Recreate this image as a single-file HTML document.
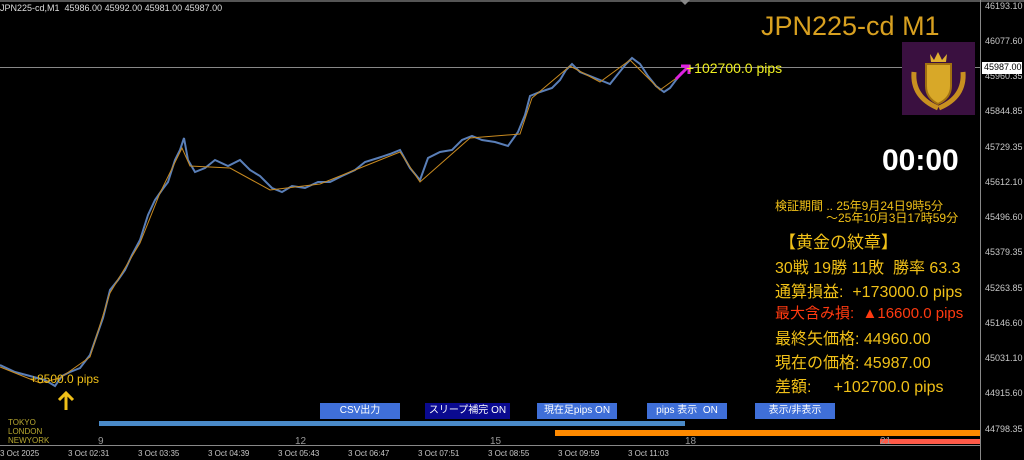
<!DOCTYPE html>
<html><head><meta charset="utf-8"><style>
*{margin:0;padding:0;box-sizing:border-box}
body{width:1024px;height:460px;background:#000;overflow:hidden;position:relative;font-family:"Liberation Sans","Noto Sans CJK JP",sans-serif}
.a{position:absolute;white-space:nowrap}
.ax{position:absolute;left:985px;font-size:9px;color:#c8c8c8}
.t{position:absolute;top:449px;font-size:8px;color:#c8c8c8}
.btn{position:absolute;top:403px;height:16px;background:#3f6fd8;color:#fff;font-size:10px;text-align:center;line-height:16px}
.y{color:#f0c018}
</style></head><body>
<div class="a" style="left:0;top:0;width:1024px;height:2px;background:#555"></div>
<div class="a" style="left:0;top:3px;font-size:9px;color:#ddd">JPN225-cd,M1&nbsp; 45986.00 45992.00 45981.00 45987.00</div>
<div class="a" style="left:980px;top:0;width:1px;height:460px;background:#888"></div>
<div class="a" style="left:0;top:445px;width:981px;height:1px;background:#888"></div>
<div class="a" style="left:0;top:67px;width:980px;height:1px;background:#888"></div>
<svg class="a" style="left:0;top:0" width="980" height="445">
<polyline fill="none" stroke="#5a7fb8" stroke-width="2" points="0,365 15,372 30,376 45,380 55,386 62,376 70,372 80,368 90,355 97,335 103,318 110,290 118,280 125,270 132,255 140,240 148,215 155,200 162,190 168,182 175,160 180,150 184,138 188,160 195,172 205,168 215,160 228,166 240,160 250,170 260,176 272,188 282,192 292,186 305,188 318,182 330,182 342,176 355,170 365,162 378,158 390,154 400,150 410,168 420,180 428,158 440,152 452,150 462,140 472,136 482,140 495,142 508,146 518,132 525,115 530,96 540,92 552,88 560,80 566,70 572,64 580,72 590,76 600,80 610,84 618,74 626,64 632,58 640,64 648,76 656,86 664,92 670,88 676,80 682,72"/>
<polyline fill="none" stroke="#c88a20" stroke-width="1" points="0,367 20,375 40,383 60,378 90,357 110,293 140,243 160,193 182,148 190,166 230,168 270,190 320,184 360,168 400,152 420,182 470,138 520,134 532,98 570,66 600,82 630,60 660,90 682,74"/>
<path d="M687,68 L676,79" stroke="#e020e0" stroke-width="3"/><path d="M681,66 L689,66 L689,74" fill="none" stroke="#e020e0" stroke-width="3"/>
<path d="M66,410 L66,394 M59,400 L66,393 L73,400" fill="none" stroke="#f0c018" stroke-width="3"/>
<rect x="99" y="421" width="586" height="5" fill="#4a8ac8"/>
<rect x="555" y="430" width="425" height="6" fill="#ff8a00"/>
<rect x="880" y="439" width="100" height="5" fill="#ff5a48"/>
</svg>
<div class="a y" style="left:30px;top:372px;font-size:12px">+8500.0 pips</div>
<div class="a" style="left:686px;top:60px;font-size:14px;color:#f0f020">+102700.0 pips</div>
<div class="a" style="left:761px;top:11px;font-size:27px;color:#d8a020">JPN225-cd M1</div>
<div class="a" style="left:902px;top:42px;width:73px;height:73px;background:#3a1040"><svg width="73" height="73"><path d="M12,30 Q10,55 36,66 M61,30 Q63,55 37,66" stroke="#c89020" stroke-width="5" fill="none"/><path d="M24,22 L49,22 L49,44 Q49,56 36,62 Q24,56 24,44Z" fill="#d8a828" stroke="#a07010" stroke-width="2"/><path d="M28,12 L32,18 L36,10 L40,18 L45,12 L44,20 L29,20Z" fill="#e0b030"/></svg></div>
<div class="a" style="left:882px;top:144px;font-size:30px;font-weight:bold;color:#fff">00:00</div>
<div class="a y" style="left:775px;top:197px;font-size:12px">検証期間 .. 25年9月24日9時5分</div>
<div class="a y" style="left:826px;top:209px;font-size:12px">～25年10月3日17時59分</div>
<div class="a y" style="left:779px;top:228px;font-size:17px">【黄金の紋章】</div>
<div class="a y" style="left:775px;top:254px;font-size:16px">30戦 19勝 11敗&nbsp; 勝率 63.3</div>
<div class="a y" style="left:775px;top:278px;font-size:16px">通算損益:&nbsp; +173000.0 pips</div>
<div class="a" style="left:775px;top:302px;font-size:15px;color:#ff3a10">最大含み損:&nbsp; ▲16600.0 pips</div>
<div class="a y" style="left:775px;top:325px;font-size:16px">最終矢価格: 44960.00</div>
<div class="a y" style="left:775px;top:349px;font-size:16px">現在の価格: 45987.00</div>
<div class="a y" style="left:775px;top:373px;font-size:16px">差額:&nbsp;&nbsp;&nbsp;&nbsp; +102700.0 pips</div>
<div class="btn" style="left:320px;width:80px">CSV出力</div>
<div class="btn" style="left:425px;width:85px;background:#0a0a90">スリープ補完 ON</div>
<div class="btn" style="left:537px;width:80px">現在足pips ON</div>
<div class="btn" style="left:647px;width:80px">pips 表示&nbsp; ON</div>
<div class="btn" style="left:755px;width:80px">表示/非表示</div>
<div class="a" style="left:8px;top:418px;font-size:8px;line-height:9px;color:#b8a830">TOKYO<br>LONDON<br>NEWYORK</div>
<div class="a" style="left:98px;top:436px;font-size:10px;color:#999">9</div>
<div class="a" style="left:295px;top:436px;font-size:10px;color:#999">12</div>
<div class="a" style="left:490px;top:436px;font-size:10px;color:#999">15</div>
<div class="a" style="left:685px;top:436px;font-size:10px;color:#999">18</div>
<div class="a" style="left:880px;top:436px;font-size:10px;color:#999">21</div>
<div class="t" style="left:0">3 Oct 2025</div><div class="t" style="left:68px">3 Oct 02:31</div><div class="t" style="left:138px">3 Oct 03:35</div><div class="t" style="left:208px">3 Oct 04:39</div><div class="t" style="left:278px">3 Oct 05:43</div><div class="t" style="left:348px">3 Oct 06:47</div><div class="t" style="left:418px">3 Oct 07:51</div><div class="t" style="left:488px">3 Oct 08:55</div><div class="t" style="left:558px">3 Oct 09:59</div><div class="t" style="left:628px">3 Oct 11:03</div>
<div class="ax" style="top:1px">46193.10</div><div class="ax" style="top:36px">46077.60</div><div class="ax" style="top:71px">45960.35</div><div class="ax" style="top:106px">45844.85</div><div class="ax" style="top:142px">45729.35</div><div class="ax" style="top:177px">45612.10</div><div class="ax" style="top:212px">45496.60</div><div class="ax" style="top:247px">45379.35</div><div class="ax" style="top:283px">45263.85</div><div class="ax" style="top:318px">45146.60</div><div class="ax" style="top:353px">45031.10</div><div class="ax" style="top:388px">44915.60</div><div class="ax" style="top:424px">44798.35</div>
<div class="a" style="left:982px;top:62px;width:40px;height:12px;background:#fff;color:#000;font-size:9px;padding-left:2px">45987.00</div>
<div class="a" style="left:680px;top:0;width:0;height:0;border-left:5px solid transparent;border-right:5px solid transparent;border-top:5px solid #888"></div>
</body></html>
